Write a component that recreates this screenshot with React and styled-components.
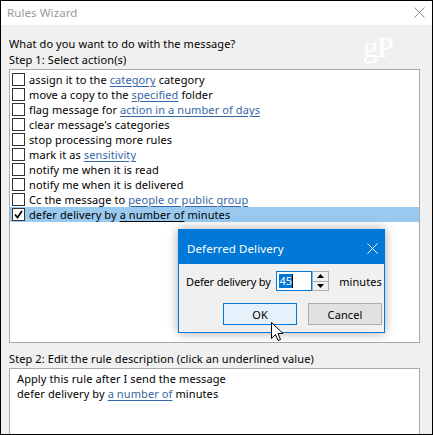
import React from "react"
import styled, { createGlobalStyle } from "styled-components"

const Global = createGlobalStyle`
  html, body {
    margin: 0;
    padding: 0;
    background: #ffffff;
  }
  * {
    box-sizing: border-box;
  }
`

const FONT = `"Noto Sans", "Open Sans", sans-serif`

const Window = styled.div`
  position: relative;
  width: 433px;
  height: 435px;
  border: 1px solid #000;
  overflow: hidden;
  background: #f0f0f0;
  font-family: ${FONT};
  font-size: 11px;
  letter-spacing: 0.1px;
  color: #000;
`

const TitleBar = styled.div`
  height: 24px;
  background: #fff;
  display: flex;
  align-items: center;
  justify-content: space-between;
  padding: 0 7px 1px 6px;
  color: #999;
  font-size: 11.5px;
`

const Body = styled.div`
  padding: 11px 12px 0 8px;
  display: flex;
  flex-direction: column;
`

const Label = styled.div`
  line-height: 15px;
  height: 15px;
  white-space: nowrap;
  margin-top: ${(p) => p.$top || 0}px;
`

const ListBox = styled.div`
  margin-top: 2px;
  height: 274px;
  background: #fff;
  border: 1px solid #aaaaaa;
  padding-top: 2px;
`

const Row = styled.div`
  height: 15px;
  display: flex;
  align-items: center;
  padding-left: 2px;
  background: ${(p) => (p.$selected ? "#99c9ef" : "transparent")};
  white-space: nowrap;
  line-height: 15px;
`

const Box = styled.span`
  width: 13px;
  height: 13px;
  border: 1px solid #333;
  background: #fff;
  margin-right: 4px;
  flex: none;
  display: flex;
  align-items: center;
  justify-content: center;
`

const Link = styled.span`
  color: ${(p) => (p.$dark ? "#000" : "#3667a6")};
  text-decoration: underline;
  text-underline-offset: 2px;
`

const DescBox = styled.div`
  margin-top: 2px;
  height: 90px;
  background: #fff;
  border: 1px solid #aaaaaa;
  padding: 2px 7px;
`

const Watermark = styled.div`
  position: absolute;
  left: 362px;
  top: 29px;
  font-family: "Liberation Serif", serif;
  font-size: 30px;
  color: #ffffff;
  letter-spacing: -1px;
`

const Dialog = styled.div`
  position: absolute;
  left: 177px;
  top: 228px;
  width: 207px;
  height: 104px;
  border: 1px solid #0078d7;
  background: #f0f0f0;
  box-shadow: 0 0 10px rgba(0, 0, 0, 0.35);
  display: flex;
  flex-direction: column;
`

const DialogTitle = styled.div`
  height: 34px;
  background: #0078d7;
  color: #fff;
  font-size: 11.5px;
  display: flex;
  align-items: center;
  justify-content: space-between;
  padding: 2px 6px 0 8px;
`

const DialogBody = styled.div`
  flex: 1;
  padding: 7px 2px 0 7px;
  display: flex;
  flex-direction: column;
`

const FieldRow = styled.div`
  display: flex;
  align-items: center;
  height: 20px;
`

const FieldLabel = styled.span`
  width: 93px;
  white-space: nowrap;
  letter-spacing: -0.15px;
`

const Input = styled.div`
  width: 36px;
  height: 20px;
  border: 1px solid #0078d7;
  background: #fff;
  display: flex;
  align-items: center;
  padding-left: 2px;
`

const Selected = styled.span`
  background: #0078d7;
  color: #fff;
  line-height: 14px;
`

const Caret = styled.span`
  width: 1px;
  height: 14px;
  background: #000;
`

const Spinner = styled.div`
  width: 18px;
  height: 20px;
  border: 1px solid #adadad;
  background: #f0f0f0;
  display: flex;
  flex-direction: column;
  margin-right: 10px;
`

const SpinHalf = styled.div`
  flex: 1;
  display: flex;
  align-items: center;
  justify-content: center;
  border-top: ${(p) => (p.$bottom ? "1px solid #adadad" : "none")};
`

const Buttons = styled.div`
  display: flex;
  justify-content: flex-end;
  gap: 11px;
  margin-top: 12px;
`

const Button = styled.div`
  width: 74px;
  height: 22px;
  display: flex;
  align-items: center;
  justify-content: center;
  background: ${(p) => (p.$primary ? "#e5f1fb" : "#e1e1e1")};
  border: 1px solid ${(p) => (p.$primary ? "#0078d7" : "#adadad")};
`

const Cursor = styled.svg`
  position: absolute;
  left: 270px;
  top: 321px;
`

const actions = [
  ["assign it to the ", "category", " category"],
  ["move a copy to the ", "specified", " folder"],
  ["flag message for ", "action in a number of days", ""],
  ["clear message's categories"],
  ["stop processing more rules"],
  ["mark it as ", "sensitivity", ""],
  ["notify me when it is read"],
  ["notify me when it is delivered"],
  ["Cc the message to ", "people or public group", ""],
  ["defer delivery by ", "a number of", " minutes"],
]

const Close = ({ color, size = 11, stroke = 1 }) => (
  <svg width={size} height={size} viewBox="0 0 11 11">
    <path d="M0.5 0.5 L10.5 10.5 M10.5 0.5 L0.5 10.5" stroke={color} strokeWidth={stroke} />
  </svg>
)

const App = () => {
  return (
    <Window>
      <Global />
      <TitleBar>
        <span>Rules Wizard</span>
        <Close color="#888" size={11} />
      </TitleBar>
      <Body>
        <Label>What do you want to do with the message?</Label>
        <Label $top={1}>Step 1: Select action(s)</Label>
        <ListBox>
          {actions.map((a, i) => {
            const sel = i === actions.length - 1
            return (
              <Row key={i} $selected={sel}>
                <Box>
                  {sel && (
                    <svg width="9" height="9" viewBox="0 0 9 9">
                      <path d="M1 4.5 L3.5 7.5 L8 1" fill="none" stroke="#000" strokeWidth="1.8" />
                    </svg>
                  )}
                </Box>
                <span>
                  {a[0]}
                  {a[1] && <Link $dark={sel}>{a[1]}</Link>}
                  {a[2]}
                </span>
              </Row>
            )
          })}
        </ListBox>
        <Label $top={8}>Step 2: Edit the rule description (click an underlined value)</Label>
        <DescBox>
          <Label>Apply this rule after I send the message</Label>
          <Label>
            defer delivery by <Link>a number of</Link> minutes
          </Label>
        </DescBox>
      </Body>
      <Watermark>gP</Watermark>
      <Dialog>
        <DialogTitle>
          <span>Deferred Delivery</span>
          <Close color="#fff" size={11} />
        </DialogTitle>
        <DialogBody>
          <FieldRow>
            <FieldLabel>Defer delivery by</FieldLabel>
            <Input>
              <Selected>45</Selected>
              <Caret />
            </Input>
            <Spinner>
              <SpinHalf>
                <svg width="7" height="4" viewBox="0 0 7 4">
                  <path d="M3.5 0 L7 4 L0 4 Z" fill="#000" />
                </svg>
              </SpinHalf>
              <SpinHalf $bottom>
                <svg width="7" height="4" viewBox="0 0 7 4">
                  <path d="M0 0 L7 0 L3.5 4 Z" fill="#000" />
                </svg>
              </SpinHalf>
            </Spinner>
            <span>minutes</span>
          </FieldRow>
          <Buttons>
            <Button $primary>OK</Button>
            <Button>Cancel</Button>
          </Buttons>
        </DialogBody>
      </Dialog>
      <Cursor width="13" height="21" viewBox="0 0 13 21">
        <path
          d="M0.5 0.5 L0.5 16.5 L4.5 12.5 L7 18.5 L9.5 17.5 L7 11.5 L12 11.5 Z"
          fill="#fff"
          stroke="#000"
          strokeWidth="1"
        />
      </Cursor>
    </Window>
  )
}

export default App
